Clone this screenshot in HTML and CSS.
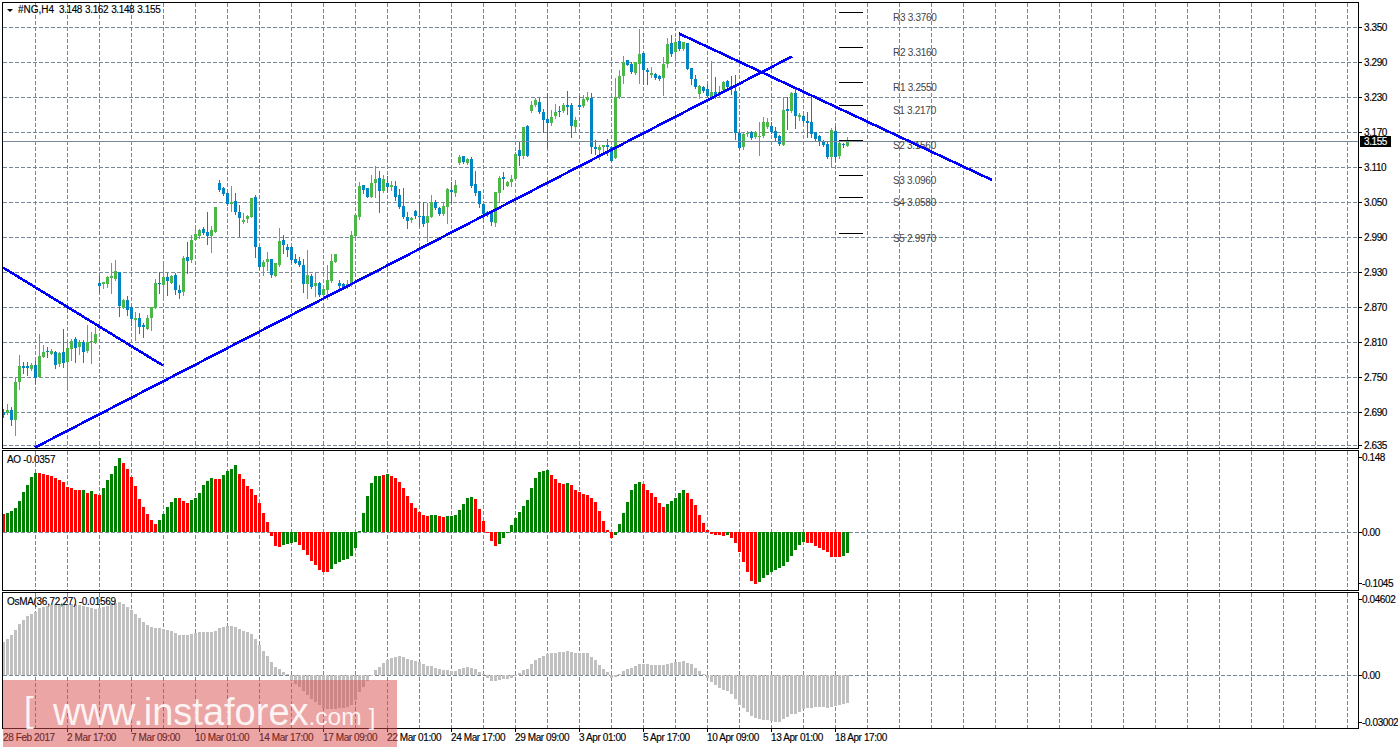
FILE: index.html
```html
<!DOCTYPE html>
<html lang="en">
<head>
<meta charset="utf-8">
<title>#NG,H4</title>
<link rel="stylesheet" href="styles.css">
</head>
<body>
<main class="chart">
  <section class="pane pane-price">
    <div class="plot">
      <svg id="price" class="canvas" viewBox="3 3 1355 445" width="1355" height="445"></svg>
      <div class="title title-main"><span class="arrow"></span><span class="symbol">#NG,H4</span><span class="ohlc">3.148 3.162 3.148 3.155</span></div>
    </div>
    <div class="axis" id="axis-price"></div>
  </section>
  <section class="pane pane-ao">
    <div class="plot">
      <svg id="ao" class="canvas" viewBox="3 451 1355 139" width="1355" height="139"></svg>
      <div class="title">AO -0.0357</div>
    </div>
    <div class="axis" id="axis-ao"></div>
  </section>
  <section class="pane pane-osma">
    <div class="plot">
      <svg id="osma" class="canvas" viewBox="3 593 1355 135" width="1355" height="135"></svg>
      <div class="title">OsMA(36,72,27) -0.01569</div>
    </div>
    <div class="axis" id="axis-osma"></div>
  </section>
  <footer class="timeline">
    <span class="time time-first">28 Feb 2017</span>
    <span class="time">2 Mar 17:00</span>
    <span class="time">7 Mar 09:00</span>
    <span class="time">10 Mar 01:00</span>
    <span class="time">14 Mar 17:00</span>
    <span class="time">17 Mar 09:00</span>
    <span class="time">22 Mar 01:00</span>
    <span class="time">24 Mar 17:00</span>
    <span class="time">29 Mar 09:00</span>
    <span class="time">3 Apr 01:00</span>
    <span class="time">5 Apr 17:00</span>
    <span class="time">10 Apr 09:00</span>
    <span class="time">13 Apr 01:00</span>
    <span class="time">18 Apr 17:00</span>
  </footer>
</main>
<aside class="watermark">
  <span class="wm-open">[</span><span class="wm-site">www.instaforex</span><span class="wm-com">.com</span><span class="wm-close">]</span>
</aside>
<script src="chart.js"></script>
</body>
</html>
```

FILE: styles.css
```css
html, body {
  margin: 0;
  padding: 0;
  background: #fff;
  overflow: hidden;
}
body {
  position: relative;
  width: 1398px;
  height: 749px;
  font-family: "Liberation Sans", Arial, sans-serif;
  font-size: 10px;
  letter-spacing: -0.4px;
  color: #000;
  -webkit-text-stroke: 0.15px;
}
.chart {
  display: flex;
  flex-direction: column;
  padding: 2px 0 0 2px;
}
.pane {
  display: flex;
}
.pane-price { height: 447px; margin-bottom: 1px; }
.pane-ao { height: 141px; margin-bottom: 1px; }
.pane-osma { height: 137px; }
.plot {
  position: relative;
  box-sizing: border-box;
  width: 1357px;
  height: 100%;
  border: 1px solid #000;
}
.canvas {
  display: block;
  shape-rendering: crispEdges;
}
.title {
  position: absolute;
  left: 4px;
  top: 3px;
  line-height: 12px;
  letter-spacing: -0.3px;
  white-space: nowrap;
}
.title-main {
  display: flex;
  align-items: center;
  left: 4px;
  top: 1px;
}
.arrow {
  width: 0;
  height: 0;
  margin-right: 5px;
  border-left: 3.5px solid transparent;
  border-right: 3.5px solid transparent;
  border-top: 3.5px solid #000;
}
.symbol {
  width: 41px;
  letter-spacing: 0;
}
.ohlc {
  letter-spacing: -0.4px;
  word-spacing: 0.7px;
}
.axis {
  position: relative;
  flex: 1;
}
.lbl {
  position: absolute;
  left: 5px;
  line-height: 12px;
  margin-top: -5px;
  white-space: nowrap;
}
.lbl::before {
  content: "";
  position: absolute;
  left: -5px;
  top: 5px;
  width: 3px;
  height: 1px;
  background: #000;
}
.lbl-sub { left: 3px; }
.lbl-sub::before { left: -3px; }
.lbl-last {
  left: 1px;
  width: 27px;
  height: 11px;
  padding-left: 4px;
  line-height: 11px;
  margin-top: -5px;
  background: #000;
  color: #fff;
}
.lbl-last::before { display: none; }
.timeline {
  display: flex;
  height: 20px;
  padding-left: 1px;
  position: relative;
}
.time {
  flex: 0 0 64px;
  position: relative;
  line-height: 12px;
  padding-top: 3px;
  white-space: nowrap;
}
.time::before {
  content: "";
  position: absolute;
  left: 0;
  top: -1px;
  width: 1px;
  height: 4px;
  background: #000;
}
.time-first::before { display: none; }
.grid {
  stroke: #778899;
  stroke-width: 1;
  stroke-dasharray: 4 2;
}
.price-line {
  stroke: #778899;
  stroke-width: 1;
}
.trend {
  stroke: #0000ff;
  stroke-width: 2.6;
}
.pivot {
  stroke: #000;
  stroke-width: 1;
}
.pivot-text {
  fill: #444;
  font-family: "Liberation Sans", Arial, sans-serif;
  font-size: 10px;
  letter-spacing: -0.3px;
  shape-rendering: auto;
}
.wick-up, .body-up { fill: #4cb648; }
.wick-down, .body-down { fill: #0084c4; }
.bar-up { fill: #008000; }
.bar-down { fill: #ff0000; }
.bar-gray { fill: #c0c0c0; }
.watermark {
  position: absolute;
  left: 3px;
  top: 680px;
  box-sizing: border-box;
  width: 394px;
  height: 67px;
  padding: 13px 0 0 21px;
  display: flex;
  align-items: baseline;
  background: rgba(217, 75, 75, 0.5);
  color: rgba(255, 255, 255, 0.88);
  letter-spacing: 0;
  -webkit-text-stroke: 0;
}
.wm-open {
  font-size: 35px;
  line-height: 38px;
  width: 29px;
  position: relative;
  top: -3px;
}
.wm-site {
  font-size: 38px;
  line-height: 38px;
}
.wm-com {
  font-size: 24.5px;
  line-height: 38px;
}
.wm-close {
  font-size: 24px;
  line-height: 38px;
  margin-left: 7px;
}
```

FILE: chart.js
```js
var CANDLES = [
"b 409 412 415 417","g 404 410 413 414","b 407 410 420 425","g 377 382 420 435","g 355 366 382 389","b 362 366 368 373","b 362 366 368 375","g 363 365 369 370",
"b 361 365 378 383","g 334 356 377 377","g 345 352 357 357","b 347 351 352 357","g 349 351 354 354","b 351 352 365 368","g 352 353 364 366","b 329 352 363 367",
"g 340 348 362 389","g 339 341 349 360","b 337 339 348 362","g 340 342 347 354","b 340 342 352 362","g 325 342 351 352","g 332 341 342 363","g 327 334 343 343",
"b 276 283 286 292","g 282 282 284 288","g 276 277 284 287","g 263 276 278 293","g 260 271 279 280","b 272 272 306 316","g 299 300 308 308","b 296 300 310 315",
"b 306 307 319 325","g 312 318 320 340","b 313 318 327 333","b 323 325 327 337","g 315 318 329 329","g 307 307 318 330","g 279 283 308 308","b 272 283 284 293",
"g 261 277 285 297","b 273 277 281 295","g 275 276 283 283","b 273 275 290 294","b 285 290 293 298","g 256 258 292 295","b 242 257 261 273","g 235 240 260 262",
"g 229 234 240 240","g 229 230 236 238","b 227 229 233 234","b 212 232 236 244","g 226 230 236 252","g 207 207 232 232","b 180 183 190 191","b 187 188 194 195",
"b 193 193 204 205","g 186 202 204 211","b 193 201 212 214","b 205 212 218 236","g 213 220 222 223","g 215 216 219 222","g 198 198 217 217","b 195 197 247 257",
"b 247 247 267 269","g 260 262 267 275","g 252 259 262 270","b 259 259 275 277","g 263 263 276 276","g 228 241 265 266","b 235 240 245 253","b 244 247 250 256",
"b 246 247 260 262","b 254 259 263 263","b 257 261 265 266","b 259 265 284 292","g 250 275 284 298","b 274 276 287 288","g 272 283 286 296","b 282 283 295 296",
"g 289 289 295 296","g 265 280 290 299","g 254 261 281 282","g 254 254 262 262","b 280 283 286 290","b 283 284 287 289","g 280 284 287 288","g 231 235 284 286",
"g 215 215 236 236","g 182 186 217 219","b 185 185 190 193","b 188 188 197 197","g 175 183 197 197","g 166 179 183 197","b 171 178 191 212","g 175 179 191 192",
"b 176 183 187 192","g 181 185 187 190","b 181 186 197 200","b 189 195 207 208","b 188 206 217 218","b 212 217 221 228","g 217 218 220 222","b 210 211 216 218",
"b 202 216 217 226","b 202 216 224 226","g 203 216 223 241","g 195 202 217 217","b 200 202 208 209","b 207 208 214 215","g 202 206 214 215","g 188 189 207 223",
"b 182 190 192 202","g 180 185 193 196","g 155 157 163 164","b 156 156 162 163","g 158 159 163 164","b 157 159 186 187","b 171 184 193 195","b 191 191 204 207",
"b 204 204 214 218","b 211 212 214 216","b 212 212 222 225","g 192 192 223 226","g 176 178 193 202","b 172 177 179 189","g 181 182 186 186","g 175 179 182 186",
"g 152 154 179 180","b 142 150 156 165","g 127 127 156 158","b 125 126 156 156","g 101 105 111 112","g 98 100 105 106","b 98 102 112 113","b 109 112 120 132",
"b 93 119 123 148","g 110 117 123 125","g 104 112 116 118","b 106 111 112 116","g 103 105 111 112","b 91 105 107 114","b 103 105 126 137","g 117 120 127 131",
"b 96 105 107 109","g 95 99 106 107","g 92 97 100 101","b 93 98 147 153","b 140 147 149 154","g 145 147 150 159","g 145 145 147 151","b 139 145 147 155",
"b 146 147 161 161","g 78 97 158 158","g 70 76 97 98","g 56 62 76 83","b 60 60 65 65","b 62 64 72 73","g 62 62 73 74","g 29 54 64 83",
"b 53 53 70 84","b 68 70 72 84","g 67 73 75 77","b 73 74 78 79","b 75 76 79 80","g 57 64 78 95","g 38 44 64 67","b 35 43 54 56",
"g 38 42 52 59","b 33 41 49 50","g 42 42 49 50","b 43 43 69 69","b 68 68 79 84","b 75 79 87 88","g 85 86 94 98","b 86 87 91 92",
"b 84 89 96 97","g 61 92 97 98","b 77 92 96 98","g 86 92 94 97","g 81 82 90 91","b 80 81 87 89","b 76 86 89 94","b 75 91 133 139",
"b 131 133 148 149","g 132 134 147 149","g 131 133 134 136","b 131 132 138 139","g 131 132 137 138","g 122 136 137 155","g 117 122 136 137","g 118 122 127 128",
"b 122 126 132 133","b 127 131 138 140","b 135 136 144 145","g 98 110 145 145","b 97 109 111 129","g 92 93 111 112","b 89 93 116 128","g 113 115 117 120",
"b 115 116 121 122","b 112 121 123 137","b 94 122 134 137","b 132 132 139 140","b 135 136 142 145","b 140 141 145 146","b 141 144 157 158","g 128 130 157 166",
"b 126 131 157 161","g 142 143 156 158","b 143 144 145 147","g 137 141 146 146"
];

/* AO histogram: top of each bar, 3 units per pixel, zero at 262. */
var AO = "r207 g204 g198 g189 g168 g141 g120 g96 g84 r84 r87 r90 r93 r99 r105 r111 r126 r129 r135 r135 g135 r144 g138 r147 r150 g129 g105 g87 g63 g39 r54 r72 r96 r123 r162 r186 r207 r225 r237 g225 g207 g186 g171 g159 r159 r168 r174 g165 g159 g144 g120 g108 g99 r102 r102 g90 g78 g72 g60 r87 r102 r123 r132 r150 r174 r204 r231 r272 r303 r306 g300 g297 g294 g291 r300 r315 r330 r348 r360 r375 r381 r381 g372 g357 g351 g345 g342 g333 g309 g258 g204 g153 g114 g93 g93 r90 g87 r93 r99 r111 r129 r153 r174 r189 r201 r210 r213 g210 g210 r213 r216 g213 g213 g210 g195 g177 g159 g156 r162 r192 r228 r264 r288 r303 g297 g279 g264 g240 g219 g201 g183 g165 g129 g99 g81 g78 g75 r90 r102 r114 r117 g114 r120 r135 r141 r147 r150 r159 r171 r198 r228 r255 r279 g270 g237 g204 g171 g135 g117 g111 r117 r135 r144 r156 r174 r186 g177 g168 g159 g144 g135 r144 r162 r180 r210 r234 r255 r267 r270 r270 r273 g270 r279 r294 r321 r351 r381 r408 r417 g411 g399 g390 g381 g375 g369 g363 g351 g333 g315 g300 g291 r294 r294 r303 r309 r315 r321 r336 r336 r336 g333 g324".split(" ");

/* OsMA histogram: far end of each bar, 3 units per pixel, zero at 256. */
var OSMA = [156,147,135,120,102,90,78,72,66,54,51,48,45,42,42,42,42,42,42,45,48,51,54,57,54,51,48,42,39,36,42,51,60,72,84,96,105,111,114,114,117,120,123,129,135,135,135,132,129,126,126,126,126,123,114,111,108,108,111,117,123,126,132,147,165,183,198,216,231,237,246,252,270,282,291,303,315,327,336,345,354,357,357,357,354,354,351,345,330,306,291,273,258,240,231,219,210,204,201,198,201,207,210,213,216,222,228,228,234,237,240,240,243,243,237,234,231,234,237,246,252,264,273,273,270,267,267,264,258,249,240,237,222,210,204,198,192,189,189,186,186,183,186,189,189,189,189,201,210,225,237,246,264,261,252,243,237,234,228,222,222,222,225,225,225,225,222,219,216,216,213,219,222,234,243,252,264,276,285,294,300,303,312,327,345,354,366,378,384,387,390,390,393,396,396,387,381,372,372,366,357,354,354,351,351,351,354,351,348,345,342,339];

var PIVOTS = [[12,17,"R3 3.3760"],[47,52,"R2 3.3160"],[82,87,"R1 3.2550"],[105,110,"S1 3.2170"],[140,145,"S2 3.1560"],[175,180,"S3 3.0960"],[197,202,"S4 3.0580"],[233,238,"S5 2.9970"]];

var PRICE_LABELS = [["3.350",27],["3.290",62],["3.230",97],["3.170",132],["3.110",167],["3.050",202],["2.990",237],["2.930",272],["2.870",307],["2.810",342],["2.750",377],["2.690",412],["2.635",445]];

function barX(k) { return 2 + 4 * k; }

function verticalGrid(y1, y2) {
  var s = "";
  for (var x = 35; x <= 1347; x += 32) {
    s += '<line class="grid" x1="' + (x + .5) + '" x2="' + (x + .5) + '" y1="' + y1 + '" y2="' + y2 + '"/>';
  }
  return s;
}
function horizontalGrid(y) {
  return '<line class="grid" x1="3" x2="1358" y1="' + (y + .5) + '" y2="' + (y + .5) + '"/>';
}
function rect(cls, x, y, w, h) {
  return '<rect class="' + cls + '" x="' + x + '" y="' + y + '" width="' + w + '" height="' + h + '"/>';
}

function drawPrice() {
  var s = verticalGrid(3, 448);
  PRICE_LABELS.forEach(function (p) { s += horizontalGrid(p[1]); });
  CANDLES.forEach(function (c, k) {
    var a = c.split(" "), up = a[0] === "g", dir = up ? "up" : "down";
    var H = +a[1], T = +a[2], B = +a[3], L = +a[4], x = barX(k);
    s += rect("wick-" + dir, x + 1, H, 1, L - H + 1);
    s += rect("body-" + dir, x, T, 3, Math.max(B - T, 1));
  });
  s += '<line class="price-line" x1="3" x2="1358" y1="141.5" y2="141.5"/>';
  PIVOTS.forEach(function (p) {
    s += '<line class="pivot" x1="839" x2="863" y1="' + (p[0] + .5) + '" y2="' + (p[0] + .5) + '"/>';
    s += '<text class="pivot-text" x="893" y="' + (p[1] + 4) + '">' + p[2] + '</text>';
  });
  s += '<line class="trend" x1="3" y1="267.5" x2="163" y2="365.5"/>';
  s += '<line class="trend" x1="35" y1="447.5" x2="792" y2="56.5"/>';
  s += '<line class="trend" x1="679" y1="33.5" x2="992" y2="180"/>';
  document.getElementById("price").innerHTML = s;
}

function drawAO() {
  var s = verticalGrid(451, 590) + horizontalGrid(532);
  AO.forEach(function (v, k) {
    var z = +v.slice(1), cls = v[0] === "g" ? "bar-up" : "bar-down";
    var y = Math.round(445 + z / 3), zero = 532;
    s += y < zero ? rect(cls, barX(k), y, 3, zero - y) : rect(cls, barX(k), zero, 3, Math.max(y - zero, 1));
  });
  document.getElementById("ao").innerHTML = s;
}

function drawOsMA() {
  var s = verticalGrid(593, 728) + horizontalGrid(675);
  OSMA.forEach(function (z, k) {
    var y = Math.round(590 + z / 3), zero = 675;
    s += y < zero ? rect("bar-gray", barX(k), y, 3, zero - y) : rect("bar-gray", barX(k), zero, 3, Math.max(y - zero, 1));
  });
  document.getElementById("osma").innerHTML = s;
}

function addLabels(id, top, list, extra) {
  var axis = document.getElementById(id);
  list.forEach(function (p) {
    var el = document.createElement("span");
    el.className = "lbl " + (p[2] || extra || "");
    el.textContent = p[0];
    el.style.top = (p[1] - top) + "px";
    axis.appendChild(el);
  });
}

drawPrice();
drawAO();
drawOsMA();
addLabels("axis-price", 2, PRICE_LABELS.concat([["3.155", 141, "lbl-last"]]));
addLabels("axis-ao", 450, [["0.148", 457], ["0.00", 532], ["-0.1045", 583]], "lbl-sub");
addLabels("axis-osma", 592, [["0.04602", 599], ["0.00", 675], ["-0.03002", 722]], "lbl-sub");
```
